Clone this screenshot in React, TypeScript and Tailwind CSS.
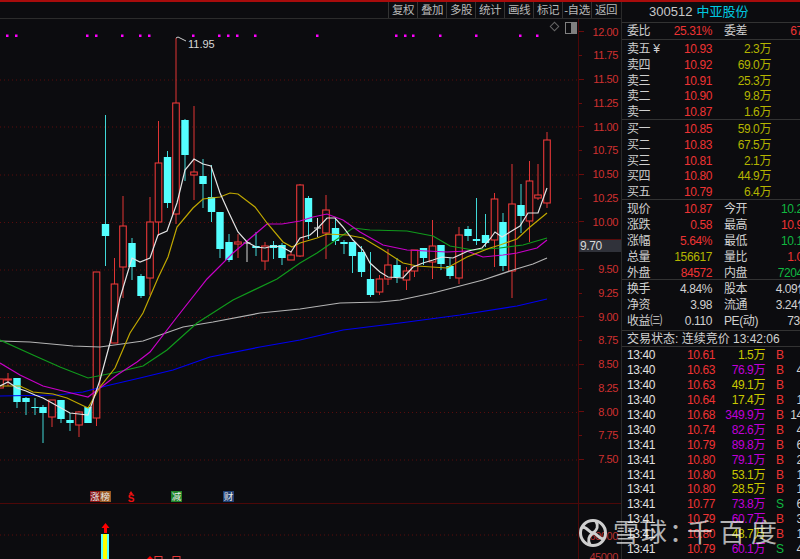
const FONT = "font-['Liberation_Sans','Noto_Sans_CJK_SC',sans-serif]"

// x, kind, body top, body bottom, wick high, wick low (page pixels)
type Candle = [number, "r" | "c" | "w", number, number, number, number]

const candles: Candle[] = [
  [0, "r", 379, 388, 379, 388],
  [8, "r", 379, 380, 373, 386],
  [17, "c", 378, 402, 378, 408],
  [26, "c", 398, 402, 397, 415],
  [35, "c", 407, 408, 398, 415],
  [43, "c", 407, 413, 405, 443],
  [52, "r", 400, 417, 400, 427],
  [61, "c", 400, 419, 400, 423],
  [70, "c", 420, 423, 413, 431],
  [79, "r", 412, 425, 411, 437],
  [88, "c", 407, 423, 407, 423],
  [96.5, "r", 272, 418, 272, 426],
  [105.5, "c", 224, 236, 115, 266],
  [114.5, "r", 284, 343, 258, 343],
  [123, "r", 226, 267, 196, 298],
  [132, "c", 243, 267, 238, 280],
  [141, "c", 276, 296, 274, 298],
  [150, "r", 222, 278, 197, 295],
  [158.5, "r", 163, 222, 121, 236],
  [167.5, "c", 157, 203, 151, 208],
  [176, "r", 103, 214, 38, 224],
  [185, "c", 120, 155, 119, 181],
  [194, "r", 172, 175, 106, 200],
  [203, "c", 176, 184, 159, 208],
  [211.5, "c", 197, 212, 165, 222],
  [220, "c", 212, 249, 212, 258],
  [229, "c", 242, 260, 234, 262],
  [238, "r", 242, 244, 234, 258],
  [247, "w", 243, 244, 241, 262],
  [256, "c", 246, 248, 232, 256],
  [265, "r", 246, 261, 242, 270],
  [273.5, "c", 245, 248, 241, 259],
  [282, "c", 245, 258, 243, 265],
  [291, "r", 255, 260, 252, 260],
  [300, "r", 185, 256, 184, 257],
  [308.5, "c", 198, 222, 196, 239],
  [317.5, "w", 228, 229, 218, 237],
  [326, "r", 210, 233, 195, 259],
  [335.5, "c", 228, 241, 218, 245],
  [344, "c", 242, 244, 240, 254],
  [352.5, "c", 242, 256, 242, 273],
  [361.5, "c", 252, 272, 246, 277],
  [370.5, "c", 279, 295, 252, 297],
  [379.5, "r", 279, 292, 275, 295],
  [388, "r", 265, 279, 249, 285],
  [397, "c", 265, 277, 258, 283],
  [406.5, "r", 271, 280, 267, 290],
  [414.5, "r", 250, 271, 250, 277],
  [423.5, "c", 248, 258, 248, 265],
  [432.5, "r", 246, 262, 220, 279],
  [441, "c", 245, 264, 245, 270],
  [450, "c", 266, 276, 258, 279],
  [459, "r", 235, 278, 227, 284],
  [468, "c", 229, 236, 226, 241],
  [476.5, "c", 239, 241, 198, 245],
  [485.5, "c", 235, 243, 214, 247],
  [494.5, "r", 199, 240, 193, 267],
  [503, "c", 222, 266, 213, 271],
  [512, "r", 204, 271, 164, 298],
  [521, "c", 205, 216, 184, 233],
  [529.5, "r", 181, 221, 161, 242],
  [538, "r", 195, 198, 164, 200],
  [547, "r", 140, 203, 132, 208],
]

const maLines: { color: string; points: string }[] = [
  {
    color: "#0000f0",
    points:
      "0,396 57,395 83,392 110,385 140,378 173,370 210,357 260,347 300,340 343,330 400,323 460,315 517,306 547,299",
  },
  {
    color: "#b4b4b4",
    points:
      "0,341 30,342 73,346 100,347 143,341 183,327 213,322 260,313 300,309 340,303 380,302 400,300 433,293 483,280 513,270 533,264 547,258",
  },
  {
    color: "#109a1c",
    points:
      "0,340 33,355 60,367 88,378 113,373 143,366 167,350 197,323 233,300 277,279 300,263 317,253 333,242 353,228 370,230 407,231 433,236 450,246 473,250 500,248 523,245 547,238",
  },
  {
    color: "#c800c8",
    points:
      "0,363 20,375 43,386 67,392 88,397 100,388 117,375 137,362 150,352 177,317 207,279 233,253 267,224 282,224 300,221 313,217 327,214 343,220 360,232 383,245 407,250 447,252 467,251 483,257 503,255 517,253 537,248 547,240",
  },
  {
    color: "#c0a800",
    points:
      "0,386 20,386 33,392 53,394 67,398 88,408 100,387 115,368 130,333 143,313 158,278 168,257 177,227 193,208 203,199 220,197 230,193 238,194 255,207 267,223 283,242 292,247 300,243 317,238 327,234 347,235 363,238 383,250 403,263 417,266 447,268 467,257 490,248 500,245 517,239 530,227 547,213",
  },
  {
    color: "#e4e4e4",
    points:
      "0,386 8,382 17,388 26,391 35,395 43,398 52,403 61,408 70,413 79,414 88,415 100,380 110,343 117,313 120,298 132,258 140,262 150,258 158,235 167,231 177,203 185,170 194,159 203,164 211,166 220,193 229,213 238,232 247,242 256,247 265,248 273,246 282,247 291,252 300,238 310,235 318,228 327,218 335,218 343,227 353,240 363,250 370,263 380,272 388,277 403,278 413,267 423,263 433,260 442,257 453,258 468,251 482,248 490,239 495,232 502,237 510,232 520,226 528,213 538,213 547,188",
  },
]

const dots = [7, 16, 87, 96, 122, 140, 149, 193, 219, 228, 237, 255, 317, 396, 405, 413, 440, 476, 520, 537]
const gridY = [80, 127, 175, 222.5, 270, 317.5, 365, 412.5, 460]
const axis = ["12.00", "11.75", "11.50", "11.25", "11.00", "10.75", "10.50", "10.25", "10.00", "9.75", "9.50", "9.25", "9.00", "8.75", "8.50", "8.25", "8.00", "7.75", "7.50"]
const tools = ["复权", "叠加", "多股", "统计", "画线", "标记", "-自选", "返回"]

const asks = [
  ["卖五", "10.93", "2.3万"],
  ["卖四", "10.92", "69.0万"],
  ["卖三", "10.91", "25.3万"],
  ["卖二", "10.90", "9.8万"],
  ["卖一", "10.87", "1.6万"],
]
const bids = [
  ["买一", "10.85", "59.0万"],
  ["买二", "10.83", "67.5万"],
  ["买三", "10.81", "2.1万"],
  ["买四", "10.80", "44.9万"],
  ["买五", "10.79", "6.4万"],
]

const WHITE = "text-[#d0d0d0]"
const RED = "text-[#ee3333]"
const GREEN = "text-[#10b840]"
const OLIVE = "text-[#b4b400]"

const stats = [
  ["现价", "10.87", RED, "今开", "10.25", GREEN],
  ["涨跌", "0.58", RED, "最高", "10.95", RED],
  ["涨幅", "5.64%", RED, "最低", "10.15", GREEN],
  ["总量", "156617", OLIVE, "量比", "1.02", RED],
  ["外盘", "84572", RED, "内盘", "72045", GREEN],
]
const stats2 = [
  ["换手", "4.84%", WHITE, "股本", "4.09亿", WHITE],
  ["净资", "3.98", WHITE, "流通", "3.24亿", WHITE],
  ["收益㈢", "0.110", WHITE, "PE(动)", "73.4", WHITE],
]

const trades: [string, string, string, boolean, string, string][] = [
  ["13:40", "10.61", "1.5万", false, "B", "8"],
  ["13:40", "10.63", "76.9万", true, "B", "42"],
  ["13:40", "10.63", "49.1万", false, "B", "9"],
  ["13:40", "10.64", "17.4万", false, "B", "16"],
  ["13:40", "10.68", "349.9万", true, "B", "142"],
  ["13:40", "10.74", "82.6万", true, "B", "45"],
  ["13:41", "10.79", "89.8万", true, "B", "63"],
  ["13:41", "10.80", "79.1万", true, "B", "27"],
  ["13:41", "10.80", "53.1万", false, "B", "18"],
  ["13:41", "10.80", "28.5万", false, "B", "12"],
  ["13:41", "10.77", "73.8万", true, "S", "61"],
  ["13:41", "10.79", "60.7万", true, "B", "34"],
  ["13:41", "10.80", "48.7万", false, "B", "15"],
  ["13:41", "10.79", "60.1万", true, "S", "47"],
]

function QuoteRow({ row, yen }: { row: string[]; yen?: boolean }) {
  return (
    <div className="flex h-[15.8px] items-center">
      <div className="flex w-[85px] justify-between">
        <span className={WHITE}>
          {row[0]}
          {yen ? <span className="ml-[3px]">¥</span> : null}
        </span>
        <span className={RED}>{row[1]}</span>
      </div>
      <span className={`w-[59px] text-right ${OLIVE}`}>{row[2]}</span>
    </div>
  )
}

function StatRow({ row }: { row: string[] }) {
  return (
    <div className="flex h-[15.8px] items-center">
      <div className="flex w-[85px] justify-between">
        <span className={WHITE}>{row[0]}</span>
        <span className={row[2]}>{row[1]}</span>
      </div>
      <span className={`ml-[12px] ${WHITE}`}>{row[3]}</span>
      <span className={`flex-1 text-right ${row[5]}`}>{row[4]}</span>
    </div>
  )
}

function Chart() {
  return (
    <svg viewBox="0 19 578 484" className="block h-[484px] w-[578px]">
      {gridY.map((y) => (
        <line key={y} x1={0} x2={578} y1={y} y2={y} stroke="#5a0c0c" strokeDasharray="1 3" />
      ))}
      {dots.map((x) => (
        <rect key={x} x={x - 1} y={34.5} width={2.5} height={2.5} fill="#ff00ff" />
      ))}
      {candles.map(([x, kind, top, bottom, high, low]) => {
        if (kind === "w") {
          return (
            <g key={x} stroke="#d8d8d8" strokeWidth={1}>
              <line x1={x} x2={x} y1={high} y2={low} />
              <line x1={x - 3.5} x2={x + 3.5} y1={top} y2={top} />
            </g>
          )
        }
        const stroke = kind === "r" ? "#e03434" : "#40d8d8"
        return (
          <g key={x}>
            <line x1={x} x2={x} y1={high} y2={low} stroke={stroke} strokeWidth={1} />
            {kind === "r" ? (
              <rect x={x - 3.3} y={top} width={6.6} height={bottom - top} fill="#0c0c0f" stroke="#e83838" strokeWidth={1.1} />
            ) : (
              <rect x={x - 3.7} y={top} width={7.4} height={bottom - top} fill="#54ffff" />
            )}
          </g>
        )
      })}
      {maLines.map((ma) => (
        <polyline key={ma.color} points={ma.points} fill="none" stroke={ma.color} strokeWidth={1.2} />
      ))}
      <polyline points="176,38 178,37 186,41" fill="none" stroke="#cfcfcf" strokeWidth={1} />
    </svg>
  )
}

function VolumeChart() {
  return (
    <svg viewBox="0 504 578 55" className="block h-[55px] w-[578px]">
      <line x1={0} x2={578} y1={535} y2={535} stroke="#5a0c0c" strokeDasharray="1 3" />
      <rect x={101} y={534} width={8} height={25} fill="#54ffff" />
      <rect x={103} y={534} width={4} height={25} fill="#ffff00" />
      <path d="M105.5 523 L109.5 528 H107 V533 H104 V528 H101.5 Z" fill="#ff0000" />
      <path d="M150 556 L153 559 H147 Z" fill="#ff0000" />
      <rect x={155} y={556.5} width={7} height={4} fill="none" stroke="#e83838" />
      <rect x={173} y={556.5} width={7} height={4} fill="none" stroke="#e83838" />
    </svg>
  )
}

export default function App() {
  return (
    <div className={`relative flex h-[559px] w-[800px] flex-col overflow-hidden bg-[#0c0c0f] text-[12px] tracking-[-0.4px] ${FONT}`}>
      <div className="h-[2px] shrink-0 bg-[#a80c0c]" />
      <div className="flex min-h-0 flex-1">
        <div className="flex w-[621px] shrink-0 flex-col">
          <div className="flex h-[17px] shrink-0 justify-end border-b border-[#2c2c2c] pr-px">
            {tools.map((t) => (
              <div key={t} className="flex w-[29px] items-center justify-center border-l border-[#333333] pt-px text-[11.5px] text-[#b8b8b8]">
                {t}
              </div>
            ))}
          </div>
          <div className="flex h-[484px] shrink-0">
            <div className="relative w-[578px] shrink-0">
              <Chart />
              <span className="absolute left-[188px] top-[17px] text-[11px] tracking-normal text-[#d8d8d8]">11.95</span>
              <div className="absolute left-[551px] top-[4px] h-[7px] w-[7px] rotate-45 border border-[#666666]" />
              <div className="absolute left-[565px] top-[3px] flex h-[12px] w-[12px] justify-end border border-[#808080]">
                <div className="w-[5px] bg-[#808080]" />
              </div>
              <div className="absolute left-[90px] top-[472px] flex text-[9.5px] leading-[11px] tracking-normal text-[#e8e8e8]">
                <span className="w-[10px] bg-[#8a1414] text-center">涨</span>
                <span className="w-[10.5px] bg-[#9a5a24] text-center">榜</span>
              </div>
              <div className="absolute left-[127px] top-[472px] flex w-[8px] flex-col items-center text-[10px] font-bold leading-[9px] tracking-normal text-[#ee1111]">
                <div className="h-0 w-0 border-x-[2px] border-b-[3px] border-x-transparent border-b-[#ee1111]" />
                <span>S</span>
              </div>
              <span className="absolute left-[171px] top-[472px] w-[11px] bg-[#208428] text-center text-[9.5px] leading-[11px] tracking-normal text-[#e8e8e8]">减</span>
              <span className="absolute left-[223px] top-[472px] w-[11px] bg-[#1f3f74] text-center text-[9.5px] leading-[11px] tracking-normal text-[#e8e8e8]">财</span>
            </div>
            <div className="relative flex-1 border-l border-[#4d0808] pt-px">
              {axis.map((a, i) => (
                <div key={a} className="flex h-[23.75px] items-center justify-between pr-[3px] text-[11px] text-[#d03030]">
                  <div className={`h-px bg-[#6a0c0c] ${i % 2 === 0 ? "w-[5px]" : "w-[3px]"}`} />
                  <span>{a}</span>
                </div>
              ))}
              {/* last price tag */}
              <div className="absolute -left-px right-0 top-[220px] flex h-[13px] items-center border border-b-0 border-r-0 border-[#5a0c0c] bg-[#30323a] pl-px text-[12px] text-[#d8d8d8]">
                9.70
              </div>
            </div>
          </div>
          <div className="flex flex-1 border-t border-[#4d0808]">
            <div className="w-[578px] shrink-0">
              <VolumeChart />
            </div>
            <div className="flex-1 border-l border-[#4d0808] pt-[25px] pr-[3px] text-right text-[11px] leading-[14px] text-[#b83030]">
              <div>60000</div>
              <div className="mt-[7px]">45000</div>
            </div>
          </div>
        </div>

        <div className="flex w-[190px] shrink-0 flex-col border-l border-[#2a2a2a] pl-[5px] pr-[2px]">
          <div className="-ml-[5px] flex h-[21px] shrink-0 items-center border-b border-[#333333] pl-[27px] text-[13px] tracking-normal">
            <span className="text-[#c8c8c8]">300512</span>
            <span className="ml-[4px] text-[#00c8e0]">中亚股份</span>
          </div>
          <div className="-ml-[5px] flex h-[17px] shrink-0 items-center border-b border-[#333333] pl-[5px]">
            <div className="flex w-[85px] justify-between">
              <span className={WHITE}>委比</span>
              <span className={RED}>25.31%</span>
            </div>
            <span className={`ml-[12px] ${WHITE}`}>委差</span>
            <span className={`flex-1 text-right ${RED}`}>677</span>
          </div>
          <div className="-ml-[5px] h-[80px] shrink-0 border-b border-[#333333] pl-[5px] pt-px">
            {asks.map((r, i) => (
              <QuoteRow key={r[0]} row={r} yen={i === 0} />
            ))}
          </div>
          <div className="-ml-[5px] h-[80px] shrink-0 border-b border-[#333333] pl-[5px] pt-px">
            {bids.map((r) => (
              <QuoteRow key={r[0]} row={r} />
            ))}
          </div>
          <div className="-ml-[5px] h-[80px] shrink-0 border-b border-[#333333] pl-[5px] pt-[1.5px]">
            {stats.map((r) => (
              <StatRow key={r[0]} row={r} />
            ))}
          </div>
          <div className="-ml-[5px] h-[51px] shrink-0 border-b border-[#333333] pl-[5px] pt-px">
            {stats2.map((r) => (
              <StatRow key={r[0]} row={r} />
            ))}
          </div>
          <div className={`-ml-[5px] flex h-[16px] shrink-0 items-center border-b border-[#333333] pl-[5px] pt-px tracking-[0] ${WHITE}`}>
            交易状态: 连续竞价 13:42:06
          </div>
          <div className="pt-[1px]">
            {trades.map(([time, price, vol, big, side, count], i) => (
              <div key={i} className="flex h-[14.9px] shrink-0 items-center">
                <div className="flex w-[88px] justify-between">
                  <span className="text-[#e0e0e0]">{time}</span>
                  <span className={RED}>{price}</span>
                </div>
                <span className={`w-[50px] text-right ${big ? "text-[#c000d8]" : "text-[#c8c800]"}`}>{vol}</span>
                <span className={`ml-[11px] ${side === "S" ? GREEN : RED}`}>{side}</span>
                <span className={`flex-1 text-right ${WHITE}`}>{count}</span>
              </div>
            ))}
          </div>
        </div>
      </div>

      {/* 雪球 watermark */}
      <div className="absolute left-[578px] top-[517px] flex items-center text-[26px] leading-[32px] tracking-normal text-white/70">
        <svg viewBox="0 0 30 30" className="h-[30px] w-[30px]" fill="none" stroke="#cfcfcf" strokeWidth={3}>
          <circle cx={15} cy={15} r={12.5} />
          <path d="M4 9 C10 9 11 15 15 15 C19 15 20 21 26 21" />
          <path d="M12 27 C9 21 11 18 15 15 C19 12 21 9 18 3" />
        </svg>
        <span className="ml-[5px] tracking-[2px]">雪球：</span>
        <span className="-ml-[10px] tracking-[6px]">千百度</span>
      </div>
    </div>
  )
}
